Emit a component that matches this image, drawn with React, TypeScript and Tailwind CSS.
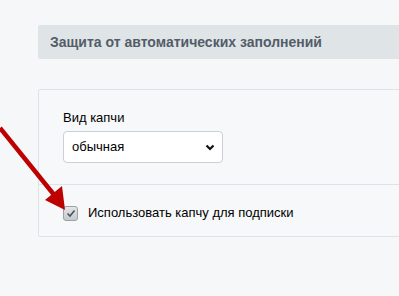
import React from "react"

export default function App() {
  return (
    <div
      className="relative h-[296px] w-[399px] overflow-hidden bg-[#f5f7f8] pl-[38px] pt-[25px]"
      style={{ fontFamily: '"Liberation Sans", Arial, sans-serif' }}
    >
      <div className="flex h-[34px] w-[400px] items-center rounded-[2px] bg-[#dfe5e7] pl-[12px]">
        <span className="text-[14px] font-bold text-[#535c69]">Защита от автоматических заполнений</span>
      </div>

      <div className="mt-[30px] w-[400px] rounded-[2px] border border-[#dde4e8] bg-[#f6f8f9]">
        <div className="border-b border-[#dde4e8] px-[24px] pb-[21px] pt-[20px]">
          <div className="text-[13px] leading-[16px] text-[#000]">Вид капчи</div>
          <div className="mt-[5px] flex h-[32px] w-[160px] items-center justify-between rounded-[4px] border border-[#c9d0d6] bg-white pl-[8px] pr-[7px]">
            <span className="text-[13px] text-[#000]">обычная</span>
            <svg width="10" height="7" viewBox="0 0 10 7">
              <path d="M1.5 1.5 L5 5 L8.5 1.5" fill="none" stroke="#111" strokeWidth="2.2" />
            </svg>
          </div>
        </div>
        <div className="flex items-center px-[24px] pb-[15px] pt-[20px]">
          <span className="flex h-[15px] w-[15px] items-center justify-center rounded-[3px] border border-[#9aa1a7] bg-gradient-to-b from-[#e3e6e8] to-[#c5c9cd]">
            <svg width="10" height="9" viewBox="0 0 10 9">
              <path d="M1.5 4.5 L4 7 L8.5 1.5" fill="none" stroke="#4d5358" strokeWidth="1.6" />
            </svg>
          </span>
          <span className="ml-[10px] text-[13px] leading-[16px] text-[#000]">Использовать капчу для подписки</span>
        </div>
      </div>

      <svg className="absolute left-0 top-0" width="80" height="230" viewBox="0 0 80 230">
        <line x1="0" y1="128" x2="55" y2="196" stroke="#bd0000" strokeWidth="4.5" />
        <polygon points="65,210 45,200 62,186" fill="#bd0000" />
      </svg>
    </div>
  )
}
